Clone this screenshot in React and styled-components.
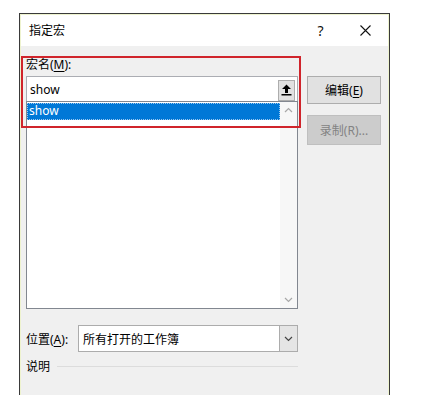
import React from 'react'
import styled, { createGlobalStyle } from 'styled-components'

const GlobalStyle = createGlobalStyle`
  html, body {
    margin: 0;
    padding: 0;
    background: #ffffff;
    overflow: hidden;
  }
  body {
    font-family: "Noto Sans", "Noto Sans CJK SC", sans-serif;
    font-size: 12px;
    color: #000;
  }
`

const Page = styled.div`
  width: 430px;
  height: 395px;
  padding: 13px 0 0 19px;
  box-sizing: border-box;
`

const Dialog = styled.div`
  position: relative;
  width: 371px;
  height: 400px;
  box-sizing: border-box;
  border: 1px solid #3a3a3a;
  box-shadow: inset 0 0 0 1px #eef3cf;
  background: #f0f0f0;
  display: flex;
  flex-direction: column;
`

const TitleBar = styled.div`
  height: 31px;
  background: #ffffff;
  display: flex;
  align-items: center;
  padding: 0 0 0 8px;
  margin: 1px 1px 0 1px;
`

const Title = styled.div`
  flex: 1;
  font-size: 12px;
  line-height: 16px;
`

const TitleButton = styled.div`
  width: 45px;
  height: 31px;
  display: flex;
  align-items: center;
  justify-content: center;
  font-size: 14px;
  color: #111;
`

const Body = styled.div`
  display: flex;
  gap: 9px;
  padding: 11px 0 0 6px;
`

const LeftColumn = styled.div`
  width: 272px;
  display: flex;
  flex-direction: column;
`

const RightColumn = styled.div`
  display: flex;
  flex-direction: column;
  gap: 11px;
  padding-top: 19px;
`

const Label = styled.div`
  height: 16px;
  line-height: 16px;
  margin-bottom: 3px;
  white-space: nowrap;
`

const Key = styled.span`
  text-decoration: underline;
  text-underline-offset: 2px;
`

const TextField = styled.div`
  height: 25px;
  box-sizing: border-box;
  border: 1px solid #abadb3;
  border-bottom: none;
  background: #fff;
  display: flex;
  align-items: center;
  padding: 0 2px 0 3px;
`

const FieldText = styled.div`
  flex: 1;
  font-size: 12px;
`

const SmallButton = styled.div`
  width: 17px;
  height: 21px;
  box-sizing: border-box;
  background: #e1e1e1;
  border: 1px solid #adadad;
  display: flex;
  align-items: center;
  justify-content: center;
  margin-top: 2px;
`

const ListBox = styled.div`
  height: 208px;
  box-sizing: border-box;
  border: 1px solid #828790;
  background: #fff;
  display: flex;
`

const ListItems = styled.div`
  flex: 1;
  padding-top: 1px;
`

const ListItem = styled.div`
  height: 17px;
  box-sizing: border-box;
  line-height: 16px;
  padding-left: 2px;
  background: ${p => (p.selected ? '#0078d7' : 'transparent')};
  color: ${p => (p.selected ? '#fff' : '#000')};
  outline: ${p => (p.selected ? '1px dotted #9cc8ef' : 'none')};
  outline-offset: -1px;
`

const ScrollBar = styled.div`
  width: 17px;
  background: #f7f7f7;
  display: flex;
  flex-direction: column;
  justify-content: space-between;
  align-items: center;
  padding: 5px 0;
  box-sizing: border-box;
`

const Button = styled.div`
  width: 74px;
  height: ${p => (p.disabled ? 30 : 28)}px;
  box-sizing: border-box;
  border: 1px solid ${p => (p.disabled ? '#bfbfbf' : '#adadad')};
  background: ${p => (p.disabled ? '#cccccc' : '#e1e1e1')};
  color: ${p => (p.disabled ? '#838383' : '#000')};
  display: flex;
  align-items: center;
  justify-content: center;
  font-size: 12px;
`

const LocationRow = styled.div`
  display: flex;
  align-items: center;
  justify-content: space-between;
  margin-top: 16px;
`

const ComboBox = styled.div`
  width: 220px;
  height: 27px;
  box-sizing: border-box;
  border: 1px solid #acacac;
  background: #fff;
  display: flex;
  align-items: stretch;
`

const ComboText = styled.div`
  flex: 1;
  display: flex;
  align-items: center;
  padding-left: 4px;
`

const ComboArrow = styled.div`
  width: 17px;
  background: #e5e5e5;
  border-left: 1px solid #acacac;
  display: flex;
  align-items: center;
  justify-content: center;
`

const DescRow = styled.div`
  display: flex;
  align-items: center;
  gap: 7px;
  margin-top: 6px;
  height: 16px;
`

const Rule = styled.div`
  flex: 1;
  height: 1px;
  background: #dcdcdc;
`

const Highlight = styled.div`
  position: absolute;
  left: 1px;
  top: 42px;
  width: 280px;
  height: 72px;
  box-sizing: border-box;
  border: 2px solid #d0242b;
  pointer-events: none;
`

const Chevron = ({ up, color = '#a8a8a8' }) => (
  <svg width="9" height="6" viewBox="0 0 9 6">
    <path d={up ? 'M1 5 L4.5 1.5 L8 5' : 'M1 1 L4.5 4.5 L8 1'} fill="none" stroke={color} strokeWidth="1.2" />
  </svg>
)

export default function App () {
  return (
    <Page>
      <GlobalStyle />
      <Dialog>
        <TitleBar>
          <Title>指定宏</Title>
          <TitleButton>?</TitleButton>
          <TitleButton>
            <svg width="11" height="11" viewBox="0 0 11 11">
              <path d="M0.5 0.5 L10.5 10.5 M10.5 0.5 L0.5 10.5" stroke="#111" strokeWidth="1.1" />
            </svg>
          </TitleButton>
        </TitleBar>
        <Body>
          <LeftColumn>
            <Label>宏名(<Key>M</Key>):</Label>
            <TextField>
              <FieldText>show</FieldText>
              <SmallButton>
                <svg width="11" height="12" viewBox="0 0 11 12">
                  <path d="M5.5 0.5 L10 5 L7 5 L7 9 L4 9 L4 5 L1 5 Z" fill="#000" />
                  <rect x="0.5" y="10" width="10" height="1.5" fill="#000" />
                </svg>
              </SmallButton>
            </TextField>
            <ListBox>
              <ListItems>
                <ListItem selected>show</ListItem>
              </ListItems>
              <ScrollBar>
                <Chevron up />
                <Chevron />
              </ScrollBar>
            </ListBox>
            <LocationRow>
              <span>位置(<Key>A</Key>):</span>
              <ComboBox>
                <ComboText>所有打开的工作簿</ComboText>
                <ComboArrow>
                  <Chevron color="#444" />
                </ComboArrow>
              </ComboBox>
            </LocationRow>
            <DescRow>
              <span>说明</span>
              <Rule />
            </DescRow>
          </LeftColumn>
          <RightColumn>
            <Button>编辑(<Key>E</Key>)</Button>
            <Button disabled>录制(R)...</Button>
          </RightColumn>
        </Body>
        <Highlight />
      </Dialog>
    </Page>
  )
}
